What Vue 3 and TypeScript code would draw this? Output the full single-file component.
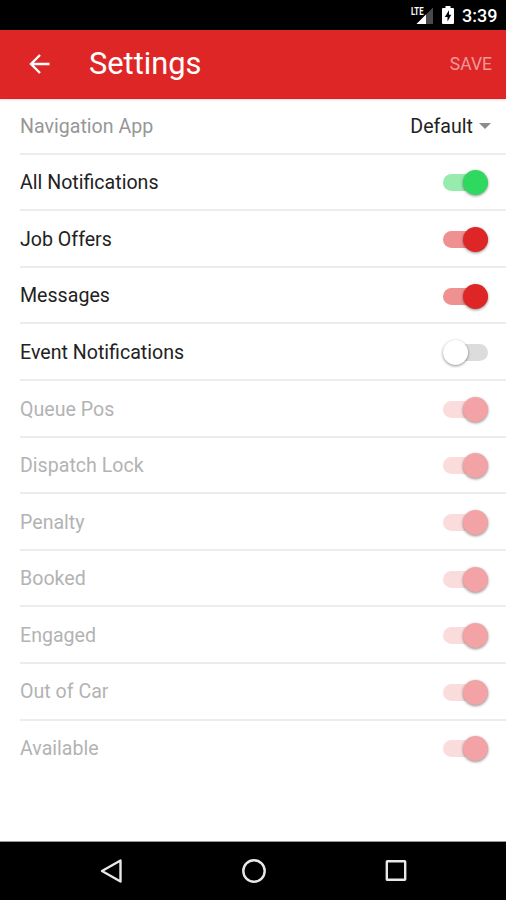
<script setup lang="ts">
interface Setting {
  label: string
  on: boolean
  tone: 'green' | 'red' | 'off'
  disabled: boolean
}

const settings: Setting[] = [
  { label: 'All Notifications', on: true, tone: 'green', disabled: false },
  { label: 'Job Offers', on: true, tone: 'red', disabled: false },
  { label: 'Messages', on: true, tone: 'red', disabled: false },
  { label: 'Event Notifications', on: false, tone: 'off', disabled: false },
  ...['Queue Pos', 'Dispatch Lock', 'Penalty', 'Booked', 'Engaged', 'Out of Car', 'Available'].map(
    (label): Setting => ({ label, on: true, tone: 'red', disabled: true }),
  ),
]
</script>

<template>
  <div class="screen">
    <div class="status">
      <svg class="signal" width="24" height="20" viewBox="0 0 24 20">
        <path d="M22 1.500V18H5.500Z" fill="#4a4a4a" />
        <path d="M15 8.500V18H5.500Z" fill="#fff" />
        <path d="M0 0H13.500V9H0Z" fill="#000" />
        <text x="0" y="8.500" textLength="12.500" lengthAdjust="spacingAndGlyphs">LTE</text>
      </svg>
      <svg class="battery" width="12" height="18" viewBox="0 0 12 18">
        <path d="M3.500 0h5v2H11q1 0 1 1v14q0 1-1 1H1q-1 0-1-1V3q0-1 1-1h2.500z" fill="#fff" />
        <path d="M7 4.200 2.800 11H5.500V15.500L9.300 8.700H7z" fill="#000" />
      </svg>
      <span class="time">3:39</span>
    </div>
    <header class="bar">
      <svg class="back" width="22" height="22" viewBox="0 0 22 22">
        <path d="M20.500 11H2.500M11 2 2 11l9 9" />
      </svg>
      <h1>Settings</h1>
      <span class="save">SAVE</span>
    </header>
    <main class="list">
      <div class="row first">
        <span class="label nav-label">Navigation App</span>
        <span class="select">Default</span>
        <svg class="caret" width="12" height="6" viewBox="0 0 12 6"><path d="M0 0h12L6 6z" fill="#8c8c8c" /></svg>
      </div>
      <div v-for="s in settings" :key="s.label" class="row" :class="{ disabled: s.disabled }">
        <span class="label">{{ s.label }}</span>
        <span class="switch" :class="[s.tone, { on: s.on }]">
          <span class="track"></span>
          <span class="thumb"></span>
        </span>
      </div>
    </main>
    <nav class="navbar">
      <svg width="24" height="26" viewBox="0 0 24 26"><path d="M21.500 2.500v21L3 13z" /></svg>
      <svg width="26" height="26" viewBox="0 0 26 26"><circle cx="13" cy="13" r="10.700" /></svg>
      <svg width="24" height="26" viewBox="0 0 24 26"><rect x="2.800" y="3.300" width="18.400" height="18.400" rx="0.500" /></svg>
    </nav>
  </div>
</template>

<style>
body {
  margin: 0;
  background: #fff;
}
</style>

<style scoped>
.screen {
  width: 506px;
  height: 900px;
  display: flex;
  flex-direction: column;
  overflow: hidden;
  background: #fff;
  font-family: Roboto, sans-serif;
  color: #222;
}
.status {
  flex: none;
  height: 30px;
  box-sizing: border-box;
  padding: 6px 9px 0 0;
  display: flex;
  justify-content: flex-end;
  background: #000;
  color: #fff;
}
.signal text {
  font: 700 11px Roboto, sans-serif;
  fill: #fff;
}
.battery {
  margin: 0 8px 0 7px;
}
.time {
  width: 35px;
  font-size: 18px;
  line-height: 19px;
  font-weight: 500;
  white-space: nowrap;
}
.bar {
  flex: none;
  height: 69px;
  box-sizing: border-box;
  padding: 0 14px 0 29px;
  display: flex;
  align-items: center;
  background: #df2626;
  border-bottom: 1px solid #d92222;
  box-shadow: 0 1px 2px rgba(200, 60, 60, 0.2);
  color: #fff;
}
.back path {
  fill: none;
  stroke: #fff;
  stroke-width: 2.4;
}
h1 {
  margin: 0 0 0 38px;
  flex: 1;
  font-size: 30.8px;
  line-height: 36px;
  font-weight: 400;
}
.save {
  margin-top: -1px;
  font-size: 17.5px;
  color: #f09a9a;
}
.list {
  flex: 1;
  padding-left: 20px;
}
.row {
  height: 56.6px;
  box-sizing: border-box;
  padding-right: 18px;
  display: flex;
  align-items: center;
  border-bottom: 2px solid #ececec;
}
.row.first {
  height: 55.6px;
  padding-right: 15px;
}
.row:last-child {
  border-bottom-color: transparent;
}
.label {
  flex: 1;
  padding-top: 1.5px;
  font-size: 19.6px;
}
.nav-label {
  color: #979797;
}
.disabled .label {
  color: #b3b3b3;
}
.select {
  padding-top: 1.5px;
  font-size: 19.6px;
}
.caret {
  margin-left: 6px;
}
.switch {
  position: relative;
  width: 45px;
  height: 26px;
  margin-top: 1px;
}
.track {
  position: absolute;
  left: 0;
  top: 5px;
  width: 45px;
  height: 17px;
  border-radius: 9px;
  background: #dcdcdc;
}
.thumb {
  position: absolute;
  left: 0;
  top: 1px;
  width: 25px;
  height: 25px;
  border-radius: 50%;
  background: #fff;
  box-shadow: 0 1px 3px rgba(0, 0, 0, 0.45);
}
.on .thumb {
  left: 20px;
}
.green .track {
  background: #96ebad;
}
.green .thumb {
  background: #2fd95f;
}
.red .track {
  background: #f09191;
}
.red .thumb {
  background: #df2626;
}
.disabled .track {
  background: #fbdcdc;
}
.disabled .thumb {
  background: #f3a3a5;
}
.navbar {
  flex: none;
  height: 59px;
  box-sizing: border-box;
  padding: 0 98px 0 99px;
  display: flex;
  align-items: center;
  justify-content: space-between;
  background: #000;
  border-top: 1px solid #9a9a9a;
}
.navbar svg * {
  fill: none;
  stroke: #e8e8e8;
  stroke-width: 2.4;
  stroke-linejoin: round;
}
</style>
